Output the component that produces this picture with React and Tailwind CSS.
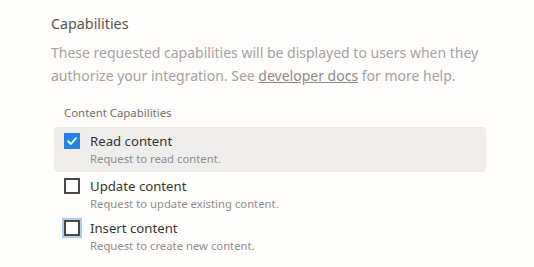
import React from "react";

function Box({ checked, focus }) {
  if (checked) {
    return (
      <div className="w-[16px] h-[16px] bg-[#2383e2] flex items-center justify-center shrink-0">
        <svg width="12" height="12" viewBox="0 0 12 12" fill="none">
          <path d="M2 6.2 L4.8 9 L10 3.2" stroke="white" strokeWidth="1.8" strokeLinecap="round" strokeLinejoin="round" />
        </svg>
      </div>
    );
  }
  return (
    <div className={"w-[16px] h-[16px] border-2 border-[#4a4844] bg-white shrink-0 " + (focus ? "outline-2 outline-[#a9cdf0]" : "")} />
  );
}

function Item({ label, desc, checked, focus, active }) {
  return (
    <div className={"flex gap-[10px] pl-[10px] pt-[5px] rounded-[4px] " + (active ? "bg-[#eeedec] pb-[5px]" : "pb-[2px]")}>
      <div className="pt-[1px]"><Box checked={checked} focus={focus} /></div>
      <div className="flex flex-col">
        <div className="text-[13.2px] leading-[19px] text-[#37352f]">{label}</div>
        <div className="text-[11.3px] leading-[16px] text-[#8f8e8b]">{desc}</div>
      </div>
    </div>
  );
}

export default function App() {
  return (
    <div className="w-[534px] h-[267px] bg-[#fffefc] pl-[51px] pt-[13px]" style={{ fontFamily: '"Noto Sans", sans-serif' }}>
      <div className="text-[14.3px] leading-[22px] text-[#55534e]">Capabilities</div>
      <div className="mt-[6px] text-[14px] leading-[23px] text-[#a3a29e] w-[450px]">
        These requested capabilities will be displayed to users when they authorize your integration. See <span className="underline text-[#8a8985]">developer docs</span> for more help.
      </div>
      <div className="mt-[18px] text-[11.4px] leading-[16px] text-[#6f6e6a] pl-[13px]">Content Capabilities</div>
      <div className="mt-[6px] w-[432px] ml-[3px] flex flex-col">
        <Item label="Read content" desc="Request to read content." checked active />
        <Item label="Update content" desc="Request to update existing content." />
        <Item label="Insert content" desc="Request to create new content." focus />
      </div>
    </div>
  );
}
